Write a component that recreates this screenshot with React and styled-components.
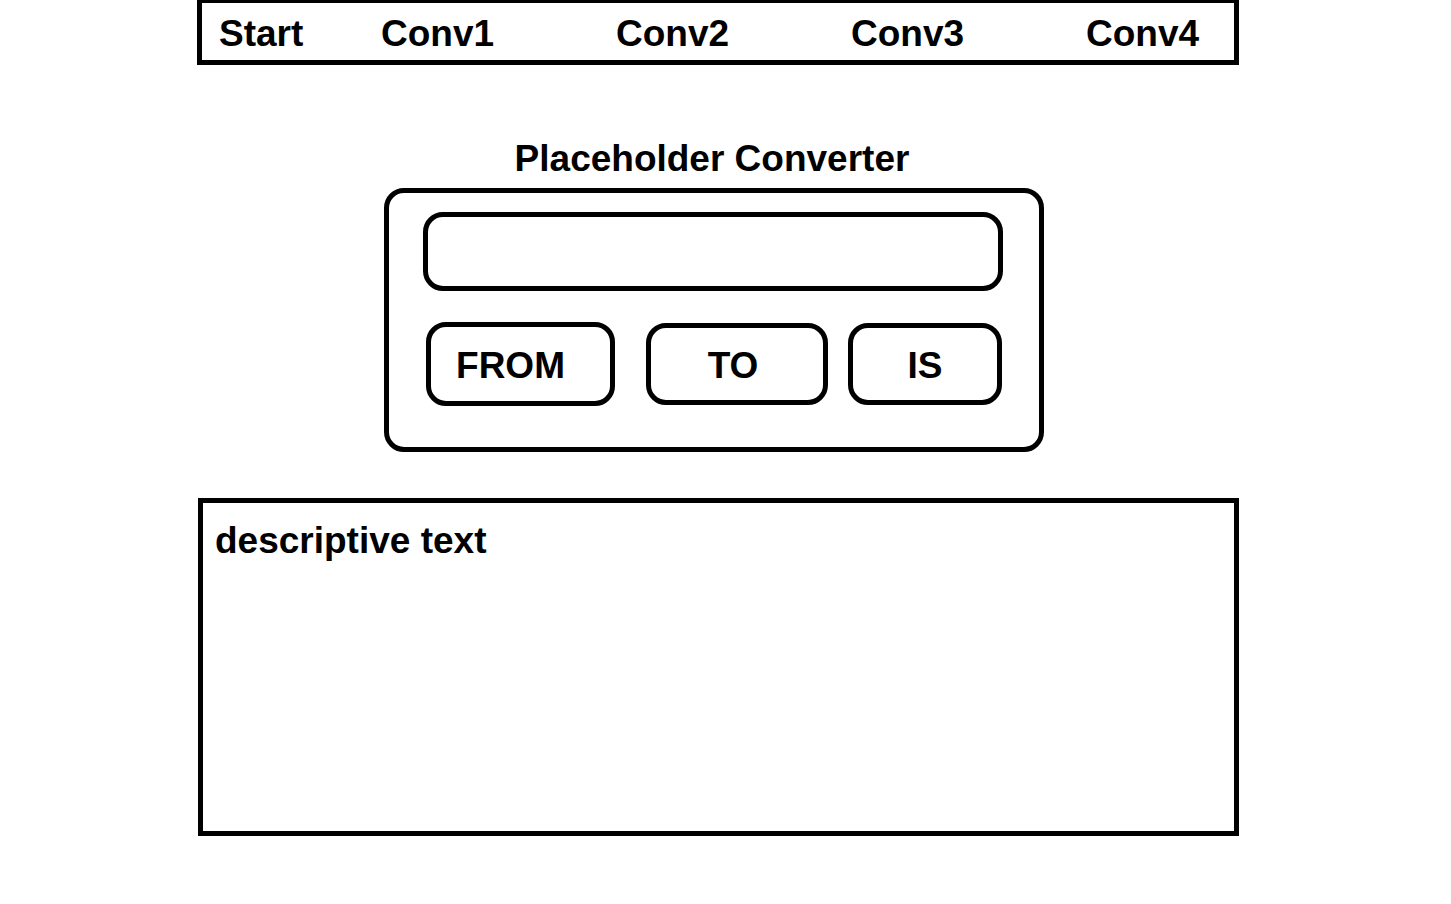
import React from 'react';
import styled, { createGlobalStyle } from 'styled-components';

const GlobalStyle = createGlobalStyle`
  *, *::before, *::after { box-sizing: border-box; }
  body {
    margin: 0;
    background: #fff;
    color: #000;
    font: bold 37px/44px "Liberation Sans", Arial, sans-serif;
  }
`;

const Page = styled.div`
  padding: 0 212px 68px 197px;
`;

const Nav = styled.nav`
  display: grid;
  grid-template-columns: 162fr 235fr 235fr 235fr 148fr;
  padding: 9px 0 4px 17px;
  border: 5px solid #000;
  border-top-width: 3px;
`;

const NavLink = styled.a`
  color: inherit;
  text-decoration: none;
`;

const Converter = styled.main`
  margin: 72px 195px 46px 187px;
`;

const Title = styled.h1`
  margin: 0 4px 7px 0;
  font: inherit;
  text-align: center;
`;

const Panel = styled.form`
  padding: 19px 36px 41px 34px;
  border: 5px solid #000;
  border-radius: 20px;
`;

const ValueInput = styled.input`
  display: block;
  width: 100%;
  height: 79px;
  padding: 0 20px;
  border: 5px solid #000;
  border-radius: 20px;
  background: #fff;
  color: inherit;
  font: inherit;
  outline: none;
`;

const Actions = styled.div`
  display: grid;
  grid-template-columns: 189fr 31px 182fr 20px 154fr;
  align-items: center;
  padding: 31px 1px 0 3px;
`;

const ActionButton = styled.button`
  grid-column: ${({ $column }) => $column};
  height: ${({ $height }) => $height}px;
  padding: 4px ${({ $inset }) => $inset}px 0 0;
  border: 5px solid #000;
  border-radius: 20px;
  background: #fff;
  color: inherit;
  font: inherit;
  text-align: center;
  cursor: pointer;
`;

const Description = styled.section`
  min-height: 338px;
  margin-left: 1px;
  padding: 16px 12px;
  border: 5px solid #000;
`;

const Text = styled.p`
  margin: 0;
`;

const links = ['Start', 'Conv1', 'Conv2', 'Conv3', 'Conv4'];

const actions = [
  { label: 'FROM', column: 1, height: 84, inset: 20 },
  { label: 'TO', column: 3, height: 82, inset: 8 },
  { label: 'IS', column: 5, height: 82, inset: 0 },
];

export default function App() {
  return (
    <>
      <GlobalStyle />
      <Page>
        <Nav>
          {links.map((link) => (
            <NavLink key={link} href={`#${link.toLowerCase()}`}>{link}</NavLink>
          ))}
        </Nav>
        <Converter>
          <Title>Placeholder Converter</Title>
          <Panel onSubmit={(event) => event.preventDefault()}>
            <ValueInput type="text" aria-label="Value to convert" />
            <Actions>
              {actions.map(({ label, column, height, inset }) => (
                <ActionButton
                  key={label}
                  type="button"
                  $column={column}
                  $height={height}
                  $inset={inset}
                >
                  {label}
                </ActionButton>
              ))}
            </Actions>
          </Panel>
        </Converter>
        <Description>
          <Text>descriptive text</Text>
        </Description>
      </Page>
    </>
  );
}
